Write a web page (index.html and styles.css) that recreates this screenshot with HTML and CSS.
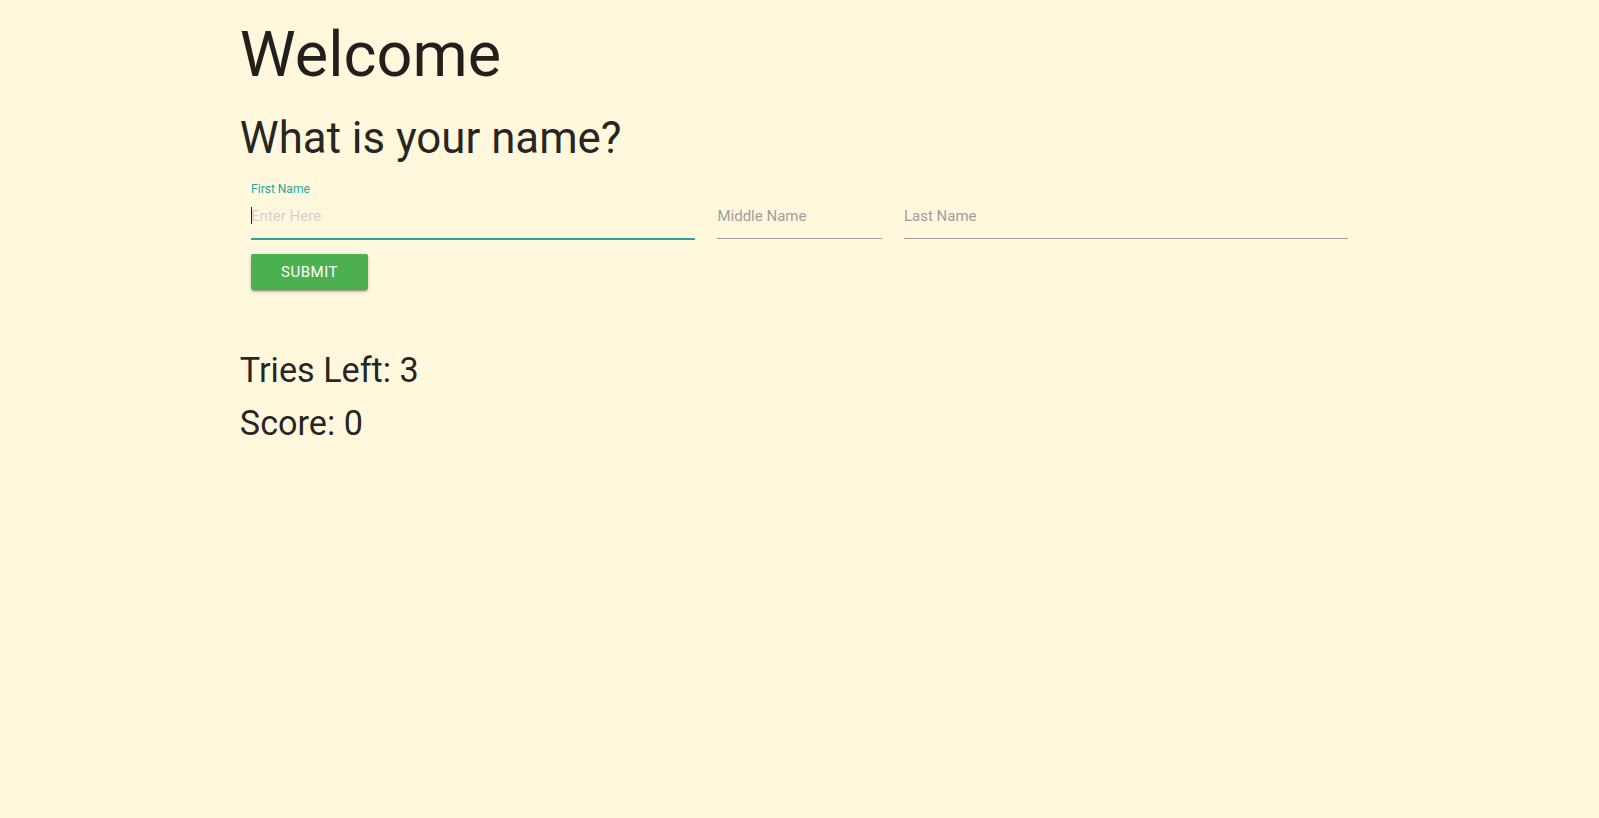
FILE: index.html
```html
<!DOCTYPE html>
<html lang="en">
<head>
<meta charset="utf-8">
<title>Welcome</title>
<link rel="stylesheet" href="styles.css">
</head>
<body>
<div class="container">
  <h1 class="title">Welcome</h1>
  <h3 class="question">What is your name?</h3>
  <form class="name-form">
    <div class="fields">
      <div class="field s5">
        <input type="text" class="name-input focused" placeholder="Enter Here">
        <label class="field-label label-active">First Name</label>
        <span class="caret"></span>
      </div>
      <div class="field s2">
        <input type="text" class="name-input">
        <label class="field-label">Middle Name</label>
      </div>
      <div class="field s5">
        <input type="text" class="name-input">
        <label class="field-label">Last Name</label>
      </div>
    </div>
    <div class="actions">
      <button type="button" class="btn">Submit</button>
    </div>
  </form>
  <div class="stats">
    <h4 class="stat">Tries Left: 3</h4>
    <h4 class="stat">Score: 0</h4>
  </div>
</div>
</body>
</html>
```

FILE: styles.css
```css
html, body {
  margin: 0;
  padding: 0;
}

body {
  background: #fff8dc;
  font-family: "Roboto", "Liberation Sans", sans-serif;
  color: rgba(0, 0, 0, 0.87);
}

.container {
  width: 70%;
  margin: 0 auto;
  padding-top: 20px;
}

.title {
  font-size: 63px;
  font-weight: 400;
  line-height: 69.3px;
  margin: 0;
}

.question {
  font-size: 43.8px;
  font-weight: 400;
  line-height: 48.2px;
  margin: 25.2px 0 0;
}

.name-form {
  margin: 0;
}

.fields {
  display: flex;
  margin-top: 15.3px;
}

.field {
  position: relative;
  box-sizing: border-box;
  padding: 15px 11.25px 0;
}

.s5 {
  width: 41.6667%;
}

.s2 {
  width: 16.6667%;
}

.name-input {
  display: block;
  width: 100%;
  height: 44px;
  margin: 0;
  padding: 1px 0 0;
  border: none;
  border-bottom: 1px solid #9e9e9e;
  border-radius: 0;
  background: transparent;
  outline: none;
  box-sizing: content-box;
  font-family: "Roboto", "Liberation Sans", sans-serif;
  font-size: 15px;
  color: rgba(0, 0, 0, 0.87);
}

.name-input::placeholder {
  color: #d1d1d1;
}

.name-input.focused {
  border-bottom-color: #26a69a;
  box-shadow: 0 1px 0 0 #26a69a;
}

.field-label {
  position: absolute;
  left: 11.25px;
  top: 16px;
  font-size: 15px;
  line-height: 45px;
  color: #9e9e9e;
  pointer-events: none;
}

.field-label.label-active {
  top: 4.4px;
  font-size: 12px;
  line-height: 14px;
  color: #26a69a;
}

.caret {
  position: absolute;
  left: 11.25px;
  top: 29px;
  width: 1px;
  height: 17px;
  background: #222;
}

.actions {
  padding: 15px 11.25px 0;
}

.btn {
  display: inline-block;
  height: 36px;
  line-height: 36px;
  padding: 0 30px;
  border: none;
  border-radius: 2px;
  background: #4caf50;
  color: #fff;
  font-family: "Roboto", "Liberation Sans", sans-serif;
  font-size: 15px;
  letter-spacing: 0.5px;
  text-transform: uppercase;
  box-shadow: 0 2px 2px 0 rgba(0, 0, 0, 0.14), 0 1px 5px 0 rgba(0, 0, 0, 0.12), 0 3px 1px -2px rgba(0, 0, 0, 0.2);
  cursor: pointer;
}

.stats {
  margin-top: 59px;
}

.stat {
  font-size: 34.2px;
  font-weight: 400;
  line-height: 43px;
  margin: 0;
}

.stat + .stat {
  margin-top: 10px;
}
```
